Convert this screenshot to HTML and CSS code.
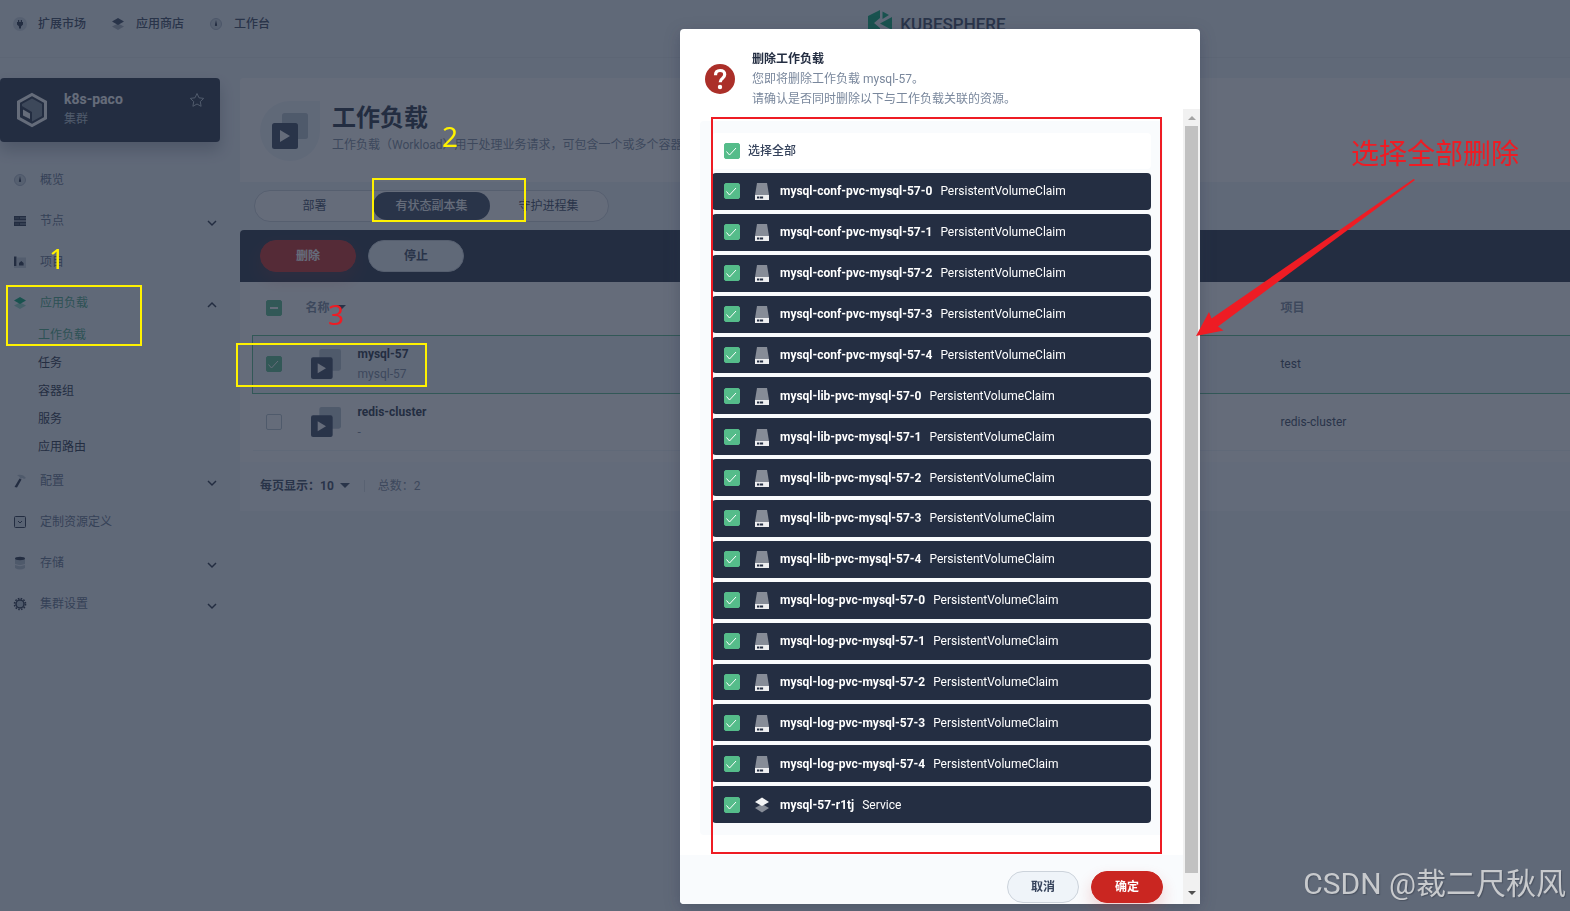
FILE: index.html
```
<!DOCTYPE html>
<html lang="zh-CN">
<head>
    <meta charset="UTF-8">
    <title>工作负载 - KubeSphere</title>
    <link rel="stylesheet" href="styles.css">
</head>
<body>
<svg class="symbols" aria-hidden="true">
    <symbol id="i-plug" viewBox="0 0 14 14"><circle cx="7" cy="7" r="7" fill="#b6c2cd" opacity=".6"/><path d="M4 5h6v2.500l-2 2v2h-2v-2l-2-2zM5 3h1.200v2H5zM7.800 3H9v2H7.800z" fill="#242e42"/></symbol>
    <symbol id="i-layers" viewBox="0 0 14 14"><path d="M1 9.500L7 6.500l6 3-6 3.500z" fill="currentColor" opacity=".4"/><path d="M1 4.500L7 1l6 3.500L7 8z" fill="currentColor"/></symbol>
    <symbol id="i-gauge" viewBox="0 0 14 14"><circle cx="7" cy="7" r="5.500" fill="#b6c2cd" opacity=".6" stroke="#7d8da3"/><path d="M7 3l1 4.500a1.100 1.100 0 1 1-2 0z" fill="#242e42"/></symbol>
    <symbol id="i-server" viewBox="0 0 14 14"><path d="M1 2h12v4.500H1zM1 7.500h12V12H1z" fill="#242e42"/><path d="M2.500 4h1M4.500 4h1M7 4h6M2.500 10h1M4.500 10h1M7 10h6" stroke="#b6c2cd" stroke-width=".8"/></symbol>
    <symbol id="i-project" viewBox="0 0 14 14"><path d="M4 2.500h9V13H1v-2h3z" fill="#b6c2cd" opacity=".8"/><path d="M1 1.500h2.500V11H1zM6 10.500V8l2.300-2 2.300 2v2.500z" fill="#242e42"/></symbol>
    <symbol id="i-hammer" viewBox="0 0 14 14"><path d="M4 1q6-1.500 9 3l-2 1-1.500-1-2 1-1-2z" fill="#b6c2cd"/><path d="M6.500 4.500L8.500 5.500 4 13.500 1.500 13z" fill="#242e42"/></symbol>
    <symbol id="i-crd" viewBox="0 0 14 14"><rect x="1.500" y="1.500" width="11" height="11" rx="1" fill="#b6c2cd" fill-opacity=".4" stroke="#242e42"/><path d="M5 6l2 2 2-2" fill="none" stroke="#242e42"/></symbol>
    <symbol id="i-disk" viewBox="0 0 14 14"><path d="M2 2v10q5 3 10 0V2z" fill="#b6c2cd"/><path d="M2 8.500q5 2.500 10 0" stroke="#eff4f9" fill="none"/><ellipse cx="7" cy="2.500" rx="5" ry="1.700" fill="#242e42"/></symbol>
    <symbol id="i-gear" viewBox="0 0 14 14"><circle cx="7" cy="7" r="5.500" fill="none" stroke="#242e42" stroke-width="1.600" stroke-dasharray="1.600 1.280"/><circle cx="7" cy="7" r="4" fill="#b6c2cd" stroke="#242e42" stroke-width="1.500"/></symbol>
    <symbol id="i-down" viewBox="0 0 10 10"><path d="M1 3l4 4 4-4" fill="none" stroke="#242e42" stroke-width="1.500"/></symbol>
    <symbol id="i-up" viewBox="0 0 10 10"><path d="M1 7l4-4 4 4" fill="none" stroke="#242e42" stroke-width="1.500"/></symbol>
    <symbol id="i-workload" viewBox="0 0 36 36"><rect x="10" y="0" width="26" height="26" rx="2.500" fill="#b6c2cd"/><rect x="0" y="10" width="26" height="26" rx="2.500" fill="#36435c"/><path d="M8 17v12l10-6z" fill="#fff"/></symbol>
    <symbol id="i-pvc" viewBox="0 0 16 20"><path d="M3 2h10l2 12H1z" fill="#fff" opacity=".45"/><path d="M1 14h14v5H1z" fill="#fff" opacity=".92"/><path d="M3 15.500h2.300v2H3zM5.900 15.500h3.200v2H5.900z" fill="#242e42"/></symbol>
    <symbol id="i-service" viewBox="0 0 16 16"><path d="M1 11l7-4 7 4-7 4.500z" fill="#fff" opacity=".45"/><path d="M1 5l7-4.500L15 5 8 9z" fill="#fff" opacity=".95"/></symbol>
</svg>

<header class="top">
    <nav class="top-nav">
        <a href="#"><svg><use href="#i-plug"/></svg>扩展市场</a>
        <a href="#"><svg><use href="#i-layers"/></svg>应用商店</a>
        <a href="#"><svg><use href="#i-gauge"/></svg>工作台</a>
    </nav>
    <a class="logo" href="#">
        <svg width="24" height="26" viewBox="0 0 24 26"><path d="M0 6L12 0v8L6 13l6 5v8L0 20zM14.500 1.500L21 5l-6.500 4zM24 7v13l-12-6.500z" fill="#00a971"/></svg>
        <span>KUBESPHERE</span>
    </a>
</header>

<div class="page">
    <aside class="side">
        <div class="cluster">
            <svg width="32" height="36" viewBox="0 0 32 36"><path d="M16 2.500L29.500 10v16L16 33.500 2.500 26V10z" fill="none" stroke="#fff" stroke-width="3"/><path d="M16 6.500l10 5.500v12l-10 5.500V20L6 14v-2z" fill="#b6c2cd" opacity=".6"/><path d="M7 17.500l7 4V27l-7-3.500z" fill="#fff"/></svg>
            <div class="cluster-text">
                <strong>k8s-paco</strong>
                <span>集群</span>
            </div>
            <svg class="star" width="16" height="16" viewBox="0 0 16 16"><path d="M8 1.500l2 4.300 4.700.6-3.400 3.200.8 4.700L8 12l-4.100 2.300.8-4.700L1.300 6.400 6 5.800z" fill="none" stroke="#b6c2cd"/></svg>
        </div>
        <ul class="menu">
            <li><a href="#"><svg><use href="#i-gauge"/></svg>概览</a></li>
            <li><a href="#"><svg><use href="#i-server"/></svg>节点<svg class="arrow"><use href="#i-down"/></svg></a></li>
            <li><a href="#"><svg><use href="#i-project"/></svg>项目</a></li>
            <li class="open">
                <a class="active" href="#"><svg><use href="#i-layers"/></svg>应用负载<svg class="arrow"><use href="#i-up"/></svg></a>
                <ul class="submenu">
                    <li><a class="active" href="#">工作负载</a></li>
                    <li><a href="#">任务</a></li>
                    <li><a href="#">容器组</a></li>
                    <li><a href="#">服务</a></li>
                    <li><a href="#">应用路由</a></li>
                </ul>
            </li>
            <li><a href="#"><svg><use href="#i-hammer"/></svg>配置<svg class="arrow"><use href="#i-down"/></svg></a></li>
            <li><a href="#"><svg><use href="#i-crd"/></svg>定制资源定义</a></li>
            <li><a href="#"><svg><use href="#i-disk"/></svg>存储<svg class="arrow"><use href="#i-down"/></svg></a></li>
            <li><a href="#"><svg><use href="#i-gear"/></svg>集群设置<svg class="arrow"><use href="#i-down"/></svg></a></li>
        </ul>
    </aside>

    <main class="main">
        <div class="banner">
            <div class="banner-icon"><svg width="36" height="36"><use href="#i-workload"/></svg></div>
            <div>
                <h1>工作负载</h1>
                <p>工作负载（Workload）用于处理业务请求，可包含一个或多个容器</p>
            </div>
        </div>
        <div class="tabs">
            <button type="button">部署</button>
            <button type="button" class="selected">有状态副本集</button>
            <button type="button">守护进程集</button>
        </div>
        <div class="toolbar">
            <button type="button" class="btn danger">删除</button>
            <button type="button" class="btn">停止</button>
        </div>
        <div class="table-wrap">
            <table>
                <thead>
                    <tr>
                        <th class="c-check"><input type="checkbox" class="check some" aria-label="全选"></th>
                        <th class="c-name">名称<i class="caret"></i></th>
                        <th>项目</th>
                    </tr>
                </thead>
                <tbody>
                    <tr class="selected">
                        <td><input type="checkbox" class="check" checked aria-label="mysql-57"></td>
                        <td>
                            <div class="name">
                                <svg width="30" height="30"><use href="#i-workload"/></svg>
                                <div><a href="#">mysql-57</a><p>mysql-57</p></div>
                            </div>
                        </td>
                        <td>test</td>
                    </tr>
                    <tr>
                        <td><input type="checkbox" class="check" aria-label="redis-cluster"></td>
                        <td>
                            <div class="name">
                                <svg width="30" height="30"><use href="#i-workload"/></svg>
                                <div><a href="#">redis-cluster</a><p>-</p></div>
                            </div>
                        </td>
                        <td>redis-cluster</td>
                    </tr>
                </tbody>
            </table>
        </div>
        <div class="pager">
            <button type="button">每页显示：10<i class="caret"></i></button>
            <span>总数：2</span>
        </div>
    </main>
</div>

<div class="mask">
    <div class="modal" role="dialog" aria-labelledby="modal-title">
        <div class="modal-head">
            <svg width="30" height="30" viewBox="0 0 30 30"><circle cx="15" cy="15" r="15" fill="#ab2f29"/><path d="M10.500 11.300q0-4.800 4.600-4.800t4.600 4q0 2-2.100 3.700-2.300 1.700-2.400 4" fill="none" stroke="#fff" stroke-width="3.200"/><circle cx="15" cy="23" r="2.200" fill="#fff"/></svg>
            <div>
                <h2 id="modal-title">删除工作负载</h2>
                <p>您即将删除工作负载 mysql-57。</p>
                <p>请确认是否同时删除以下与工作负载关联的资源。</p>
            </div>
        </div>
        <div class="modal-body">
            <div class="modal-content">
                <div class="resources">
                    <label class="all"><input type="checkbox" class="check" checked>选择全部</label>
                    <div class="list" id="list"></div>
                </div>
                <div class="modal-foot">
                    <button type="button" class="btn small">取消</button>
                    <button type="button" class="btn small danger">确定</button>
                </div>
            </div>
            <div class="scroll">
                <i class="scroll-up"></i>
                <div class="thumb"></div>
                <i class="scroll-down"></i>
            </div>
        </div>
        <div class="mark mark-list"></div>
        <div class="arrow-note">
            <span>选择全部删除</span>
            <svg width="220" height="160" viewBox="0 0 220 160"><path d="M0 157L13 133l2.500 6.500L217.500 0l1.500 1L22 147.500l5.500 4z" fill="#ee1c24"/></svg>
        </div>
    </div>
</div>

<div class="mark mark-menu"></div>
<div class="mark mark-tab"></div>
<div class="mark mark-row"></div>
<span class="step step-1">1</span>
<span class="step step-2">2</span>
<span class="step step-3">3</span>
<div class="watermark">CSDN @裁二尺秋风</div>

<script>
    var oList = document.getElementById("list");
    var groups = ["conf", "lib", "log"];
    var html = "";
    function row(name, kind, icon) {
        return '<label><input type="checkbox" class="check" checked>' +
            '<svg><use href="#' + icon + '"/></svg>' +
            '<strong>' + name + '</strong><span>' + kind + '</span></label>';
    }
    for (var i = 0; i < groups.length; i++) {
        for (var j = 0; j < 5; j++) {
            html += row("mysql-" + groups[i] + "-pvc-mysql-57-" + j, "PersistentVolumeClaim", "i-pvc");
        }
    }
    html += row("mysql-57-r1tj", "Service", "i-service");
    oList.innerHTML = html;
</script>
</body>
</html>
```
FILE: styles.css
```
* {
    box-sizing: border-box;
    margin: 0;
    padding: 0;
}
body {
    min-height: 100vh;
    overflow: hidden;
    background: #eff4f9;
    color: #242e42;
    font: 12px/20px Roboto, "Noto Sans CJK SC", sans-serif;
}
ul {
    list-style: none;
}
a {
    color: inherit;
    text-decoration: none;
}
button {
    border: 0;
    background: none;
    color: inherit;
    font: inherit;
    cursor: pointer;
}
.symbols {
    display: none;
}

/* header */
.top {
    display: flex;
    height: 58px;
    border-bottom: 1px solid #e3e9ef;
}
.top-nav {
    display: flex;
    gap: 22px;
    width: 304px;
    padding: 14px 0 0 10px;
    font-weight: 500;
    color: #36435c;
}
.top-nav a {
    display: flex;
    align-items: center;
    height: 20px;
}
.top-nav svg {
    width: 14px;
    height: 14px;
    margin: 0 11px 0 3px;
}
.logo {
    display: flex;
    flex: 1;
    justify-content: center;
    gap: 8px;
    padding-top: 10px;
    color: #36435c;
    font-size: 17px;
    line-height: 28px;
    font-weight: 500;
}

/* layout */
.page {
    display: flex;
    gap: 20px;
    padding-top: 20px;
}
.side {
    width: 220px;
}
.cluster {
    display: flex;
    gap: 16px;
    height: 64px;
    padding: 11px 15px 11px 16px;
    border-radius: 4px;
    background: #242e42;
    box-shadow: 0 8px 16px rgba(36, 46, 66, .3);
    color: #b6c2cd;
}
.cluster svg {
    margin-top: 3px;
}
.cluster-text {
    flex: 1;
}
.cluster strong {
    display: block;
    color: #fff;
    font-size: 14px;
}

/* side menu */
.menu {
    padding: 18px 0;
    color: #5f708a;
}
.menu > li {
    padding: 10px 0 11px;
}
.menu > li.open {
    padding-bottom: 0;
}
.menu > li > a {
    display: flex;
    align-items: center;
    padding: 0 3px 0 13px;
}
.menu svg {
    width: 14px;
    height: 14px;
    margin-right: 13px;
}
.menu svg.arrow {
    width: 10px;
    height: 10px;
    margin: 4px 0 0 auto;
}
.submenu {
    margin-top: 8px;
    padding-left: 38px;
    color: #242e42;
    line-height: 28px;
}
.menu .active {
    color: #45a883;
}
.menu .active svg {
    color: #00a971;
}

/* main */
.main {
    flex: 1;
    min-width: 0;
}
.banner {
    display: flex;
    gap: 12px;
    height: 104px;
    padding: 23px 20px;
    border-radius: 4px 0 0;
    background: #fff;
}
.banner-icon {
    display: flex;
    align-items: center;
    justify-content: center;
    width: 60px;
    height: 60px;
    border-radius: 30px 0 30px 30px;
    background: #eff4f9;
}
.banner h1 {
    font-size: 24px;
    line-height: 34px;
}
.banner p {
    color: #79879c;
    white-space: nowrap;
}
.tabs {
    display: grid;
    grid-template-columns: repeat(3, 1fr);
    width: 355px;
    height: 32px;
    margin: 8px 14px;
    padding: 1px;
    border: 1px solid #ccd3db;
    border-radius: 16px;
    background: #fff;
    color: #36435c;
}
.tabs .selected {
    border-radius: 14px;
    background: #36435c;
    color: #fff;
    font-weight: 500;
}
.toolbar {
    display: flex;
    gap: 12px;
    padding: 10px 20px;
    border-radius: 4px 0 0;
    background: #242e42;
}
.btn {
    width: 96px;
    height: 32px;
    border: 1px solid #ccd3db;
    border-radius: 16px;
    background: #eff4f9;
    color: #36435c;
    font-weight: 700;
}
.btn.small {
    width: 72px;
}
.btn.danger {
    border-color: #ca2621;
    background: #ca2621;
    box-shadow: 0 8px 16px rgba(202, 38, 33, .2);
    color: #fff;
}
.check {
    display: block;
    flex: none;
    width: 16px;
    height: 16px;
    appearance: none;
    border: 1px solid #b6c2cd;
    border-radius: 2px;
}
.check:checked {
    border-color: #55bc8a;
    background: #55bc8a url('data:image/svg+xml,<svg xmlns="http://www.w3.org/2000/svg" viewBox="0 0 14 14"><path d="M1.500 7.500l3 3.500L11 4" fill="none" stroke="white"/></svg>');
}
.check.some {
    border-color: #55bc8a;
    background: #55bc8a linear-gradient(#fff, #fff) center / 8px 2px no-repeat;
}

/* table */
.table-wrap {
    padding: 0 0 11px 12px;
    overflow: hidden;
    background: #fff;
}
table {
    width: 100%;
    border-collapse: collapse;
    table-layout: fixed;
    text-align: left;
}
th {
    height: 53px;
    color: #79879c;
}
td {
    height: 57px;
    border-bottom: 1px solid #eff4f9;
    color: #36435c;
}
.c-check {
    width: 53px;
}
.c-name {
    width: 74%;
}
td:first-child,
th:first-child {
    padding-left: 13px;
}
.selected td {
    height: 58px;
    border: solid #55bc8a;
    border-width: 1px 0;
    background: #eff4f9;
}
.selected td:first-child {
    border-left-width: 1px;
}
.caret {
    display: inline-block;
    margin: 0 0 2px 6px;
    border: 5px solid transparent;
    border-top-color: #36435c;
    border-bottom: 0;
}
.name {
    display: flex;
    align-items: center;
    gap: 17px;
    padding-left: 5px;
}
.name a {
    color: #242e42;
    font-weight: 700;
}
.name p {
    color: #79879c;
}
.pager {
    display: flex;
    align-items: center;
    gap: 14px;
    height: 49px;
    padding: 0 20px;
    background: #f9fbfd;
    color: #79879c;
}
.pager button {
    color: #36435c;
    font-weight: 700;
}
.pager span {
    padding-left: 13px;
    border-left: 1px solid #d8dee5;
    line-height: 12px;
}

/* dialog */
.mask {
    position: fixed;
    inset: 0;
    display: flex;
    justify-content: center;
    padding: 29px 0 7px 310px;
    background: rgba(36, 46, 66, .7);
}
.modal {
    position: relative;
    display: flex;
    flex-direction: column;
    width: 520px;
    border-radius: 4px;
    background: #fff;
    box-shadow: 0 4px 16px rgba(36, 46, 66, .3);
}
.modal-head {
    display: flex;
    align-items: center;
    gap: 17px;
    padding: 20px 25px 0;
    color: #79879c;
}
.modal-head h2 {
    color: #242e42;
    font-size: 12px;
    line-height: 20px;
}
.modal-head svg {
    flex: none;
}
.modal-body {
    display: flex;
    flex: 1;
}
.modal-content {
    display: flex;
    flex: 1;
    flex-direction: column;
    padding-top: 12px;
}
.resources {
    display: flex;
    flex: 1;
    flex-direction: column;
    gap: 4px;
    margin: 0 20px 20px;
    padding: 12px;
    border-radius: 4px;
    background: #f9fbfd;
}
.resources label {
    display: flex;
    align-items: center;
    padding: 0 12px;
    border-radius: 4px;
}
.resources .all {
    gap: 8px;
    height: 36px;
    background: #fff;
    color: #36435c;
    font-weight: 500;
}
.list {
    display: flex;
    flex: 1;
    flex-direction: column;
    gap: 4px;
}
.list label {
    flex: 1;
    background: #242e42;
    color: #fff;
}
.list svg {
    width: 16px;
    height: 20px;
    margin: 0 10px 0 14px;
}
.list span {
    margin-left: 8px;
}
.modal-foot {
    display: flex;
    justify-content: flex-end;
    gap: 12px;
    padding: 16px 20px 1px;
    border-radius: 0 0 0 4px;
    background: #f9fbfd;
}
.scroll {
    display: flex;
    flex-direction: column;
    align-items: center;
    width: 17px;
    background: #f1f1f1;
}
.thumb {
    flex: 1;
    width: 13px;
    background: #c1c1c1;
}
.scroll i {
    border: 4px solid transparent;
}
.scroll .scroll-up {
    margin: 3px 0 6px;
    border-bottom-color: #a3a3a3;
}
.scroll .scroll-down {
    margin: 18px 0 5px;
    border-top-color: #505050;
}

/* notes drawn over the page */
.mark {
    position: absolute;
    border: 2px solid #fff200;
}
.mark-menu {
    left: 6px;
    top: 285px;
    width: 136px;
    height: 61px;
}
.mark-tab {
    left: 372px;
    top: 178px;
    width: 154px;
    height: 44px;
}
.mark-row {
    left: 236px;
    top: 343px;
    width: 191px;
    height: 44px;
}
.mark-list {
    left: 31px;
    top: 88px;
    width: 451px;
    height: 737px;
    border-color: #ee1c24;
}
.step {
    position: absolute;
    color: #fff200;
    font: 28px/28px "Noto Sans", sans-serif;
}
.step-1 {
    left: 49px;
    top: 244px;
}
.step-2 {
    left: 442px;
    top: 122px;
}
.step-3 {
    left: 328px;
    top: 300px;
    color: #ee1c24;
}
.arrow-note {
    position: absolute;
    left: 516px;
    top: 106px;
    color: #ee1c24;
    font-size: 28px;
    line-height: 40px;
}
.arrow-note span {
    display: block;
    margin: 0 0 4px 155px;
    white-space: nowrap;
}
.arrow-note svg {
    display: block;
}
.watermark {
    position: absolute;
    right: 4px;
    bottom: 7px;
    color: #c8cacd;
    font-size: 30px;
    line-height: 40px;
    text-shadow: 1px 1px 1px #4a5260;
}
```
